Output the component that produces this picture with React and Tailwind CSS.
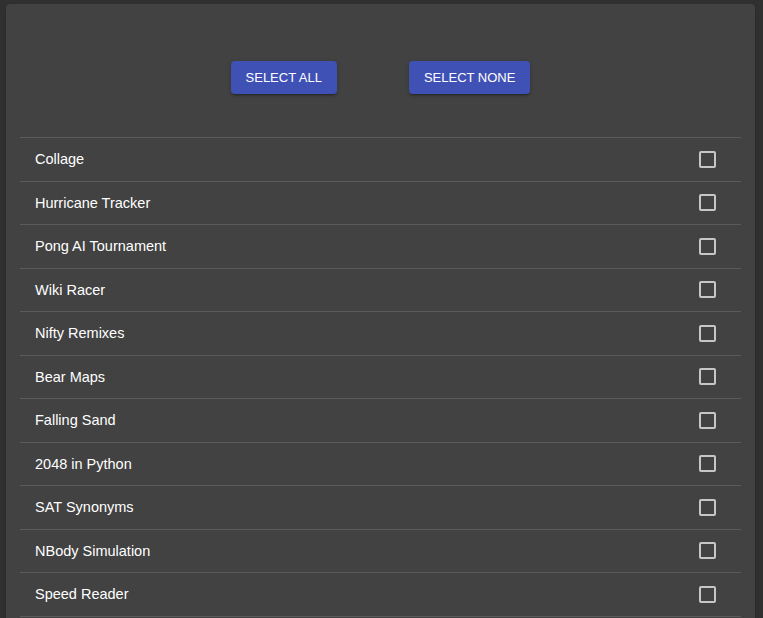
import React, { useState } from 'react';

const proyectos = [
  'Collage',
  'Hurricane Tracker',
  'Pong AI Tournament',
  'Wiki Racer',
  'Nifty Remixes',
  'Bear Maps',
  'Falling Sand',
  '2048 in Python',
  'SAT Synonyms',
  'NBody Simulation',
  'Speed Reader',
];

const Checkbox = ({ checked, onChange }) => (
  <button
    onClick={onChange}
    className="w-[17px] h-[17px] rounded-[2px] border-2 border-[#c6c6c6] flex items-center justify-center"
  >
    {checked && <span className="w-[9px] h-[9px] bg-[#c6c6c6]" />}
  </button>
);

const App = () => {
  const [seleccion, setSeleccion] = useState({});

  const toggle = (nombre) => setSeleccion((s) => ({ ...s, [nombre]: !s[nombre] }));
  const todos = () => setSeleccion(Object.fromEntries(proyectos.map((p) => [p, true])));
  const ninguno = () => setSeleccion({});

  return (
    <div className="h-[618px] overflow-hidden bg-[#303030] pt-[4px] pl-[6px] font-['Liberation_Sans',Arial,sans-serif]">
      <div className="w-[749px] bg-[#424242] rounded-[4px] shadow-[0_2px_1px_-1px_rgba(0,0,0,0.2),0_1px_1px_0_rgba(0,0,0,0.14),0_1px_3px_0_rgba(0,0,0,0.12)] px-[14px] pt-[57px] pb-10">
        {/* Botones */}
        <div className="flex justify-center gap-[72px]">
          <button
            onClick={todos}
            className="h-[33px] px-[15px] rounded-[4px] bg-[#3f51b5] text-white text-[13px] uppercase shadow-[0_3px_1px_-2px_rgba(0,0,0,0.2),0_2px_2px_0_rgba(0,0,0,0.14),0_1px_5px_0_rgba(0,0,0,0.12)]"
          >
            Select All
          </button>
          <button
            onClick={ninguno}
            className="h-[33px] px-[15px] rounded-[4px] bg-[#3f51b5] text-white text-[13px] uppercase shadow-[0_3px_1px_-2px_rgba(0,0,0,0.2),0_2px_2px_0_rgba(0,0,0,0.14),0_1px_5px_0_rgba(0,0,0,0.12)]"
          >
            Select None
          </button>
        </div>

        {/* Lista */}
        <ul className="mt-[43px] border-b border-[#5b5b5b]">
          {proyectos.map((p) => (
            <li
              key={p}
              className="h-[43.5px] border-t border-[#5b5b5b] flex items-center justify-between pl-[15px] pr-[25px]"
            >
              <span className="text-[14.5px] text-white pt-[2px]">{p}</span>
              <Checkbox checked={!!seleccion[p]} onChange={() => toggle(p)} />
            </li>
          ))}
        </ul>
      </div>
    </div>
  );
};

export default App;
